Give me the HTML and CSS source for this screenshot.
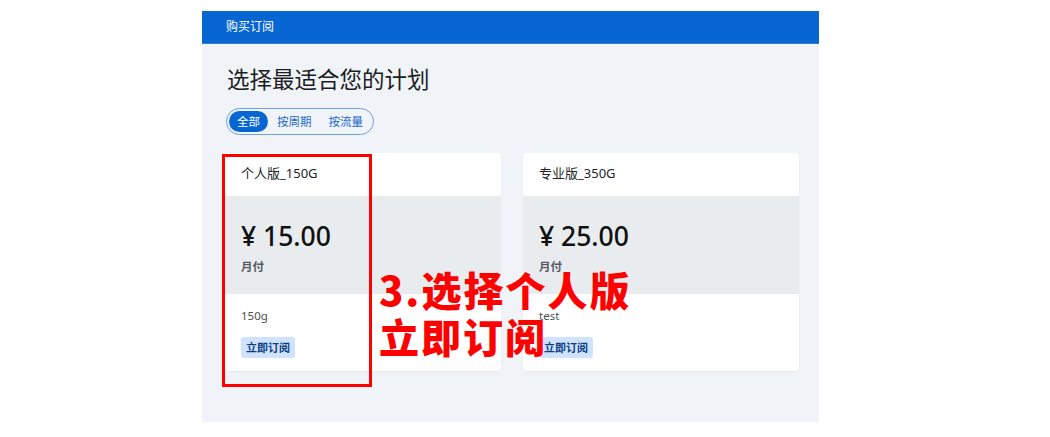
FILE: index.html
```html
<!DOCTYPE html>
<html lang="zh-CN">
<head>
	<meta charset="UTF-8">
	<title>购买订阅</title>
	<link rel="stylesheet" href="styles.css">
</head>
<body>
<div class="page">
	<div class="topbar">购买订阅</div>
	<div class="content">
		<h1>选择最适合您的计划</h1>
		<div class="tabs">
			<span class="tab active">全部</span>
			<span class="tab">按周期</span>
			<span class="tab">按流量</span>
		</div>
		<div class="plans">
			<div class="plan">
				<div class="plan-head">个人版_150G</div>
				<div class="plan-price">
					<div class="price">¥ 15.00</div>
					<div class="period">月付</div>
				</div>
				<div class="plan-foot">
					<p>150g</p>
					<span class="buy">立即订阅</span>
				</div>
			</div>
			<div class="plan">
				<div class="plan-head">专业版_350G</div>
				<div class="plan-price">
					<div class="price">¥ 25.00</div>
					<div class="period">月付</div>
				</div>
				<div class="plan-foot">
					<p>test</p>
					<span class="buy">立即订阅</span>
				</div>
			</div>
		</div>
	</div>
	<div class="mark-box"></div>
	<div class="mark-text">3.选择个人版<br>立即订阅</div>
</div>
</body>
</html>
```

FILE: styles.css
```css
*{
    margin: 0;
    padding: 0;
    box-sizing: border-box;
}

body{
    width: 100%;
    height: 100vh;
    background: #fff;
    font-family: "Noto Sans", "Noto Sans CJK SC", sans-serif;
    color: #212529;
}

.page{
    position: relative;
    width: 617px;
    margin: 11px 0 0 202px;
}

.topbar{
    height: 33px;
    padding: 0 24px;
    background: #0766d1;
    border-bottom: 1px solid #2f7fdc;
    color: #fff;
    font-size: 12px;
    line-height: 32px;
}

.content{
    height: 378px;
    padding: 20px 21px 0 23px;
    background: #f0f3f8;
}

h1{
    margin-left: 2px;
    font-size: 22.5px;
    font-weight: 400;
    line-height: 32px;
    color: #1b1e21;
}

.tabs{
    display: inline-flex;
    align-items: center;
    gap: 1px;
    height: 27px;
    margin: 12px 0 0 1px;
    padding: 0 2px;
    border: 1px solid #6f9fdc;
    border-radius: 14px;
}

.tab{
    padding: 0 8px;
    height: 21px;
    line-height: 21px;
    font-size: 11.5px;
    color: #1a67c7;
    border-radius: 11px;
}

.tab.active{
    background: #0766d1;
    color: #fff;
}

.plans{
    display: grid;
    grid-template-columns: 276px 276px;
    gap: 22px;
    margin-top: 18px;
}

.plan{
    background: #fff;
    border-radius: 4px;
    overflow: hidden;
    box-shadow: 0 1px 2px rgba(0,0,0,0.06);
}

.plan-head{
    height: 43px;
    padding: 0 16px;
    line-height: 40px;
    font-size: 13px;
    color: #212529;
}

.plan-price{
    height: 98px;
    padding: 21px 16px 0;
    background: #e9ecef;
}

.price{
    font-size: 26.5px;
    font-weight: 500;
    line-height: 38px;
    color: #111;
}

.period{
    margin-top: 3px;
    font-size: 11.5px;
    font-weight: 700;
    color: #555b61;
}

.plan-foot{
    height: 77px;
    padding: 14px 16px 0;
}

.plan-foot p{
    font-size: 11.5px;
    line-height: 16px;
    color: #495057;
}

.buy{
    display: inline-block;
    margin-top: 13px;
    padding: 0 5px;
    height: 21px;
    line-height: 21px;
    font-size: 11px;
    font-weight: 700;
    color: #0b3f80;
    background: #cfe2ff;
    border-radius: 3px;
}

.mark-box{
    position: absolute;
    left: 20px;
    top: 143px;
    width: 150px;
    height: 233px;
    border: 3px solid #f00;
}

.mark-text{
    position: absolute;
    left: 177px;
    top: 255px;
    font-size: 40px;
    font-weight: 900;
    line-height: 47px;
    letter-spacing: 2px;
    color: #f00;
    font-family: "Noto Sans CJK SC", sans-serif;
}
```
